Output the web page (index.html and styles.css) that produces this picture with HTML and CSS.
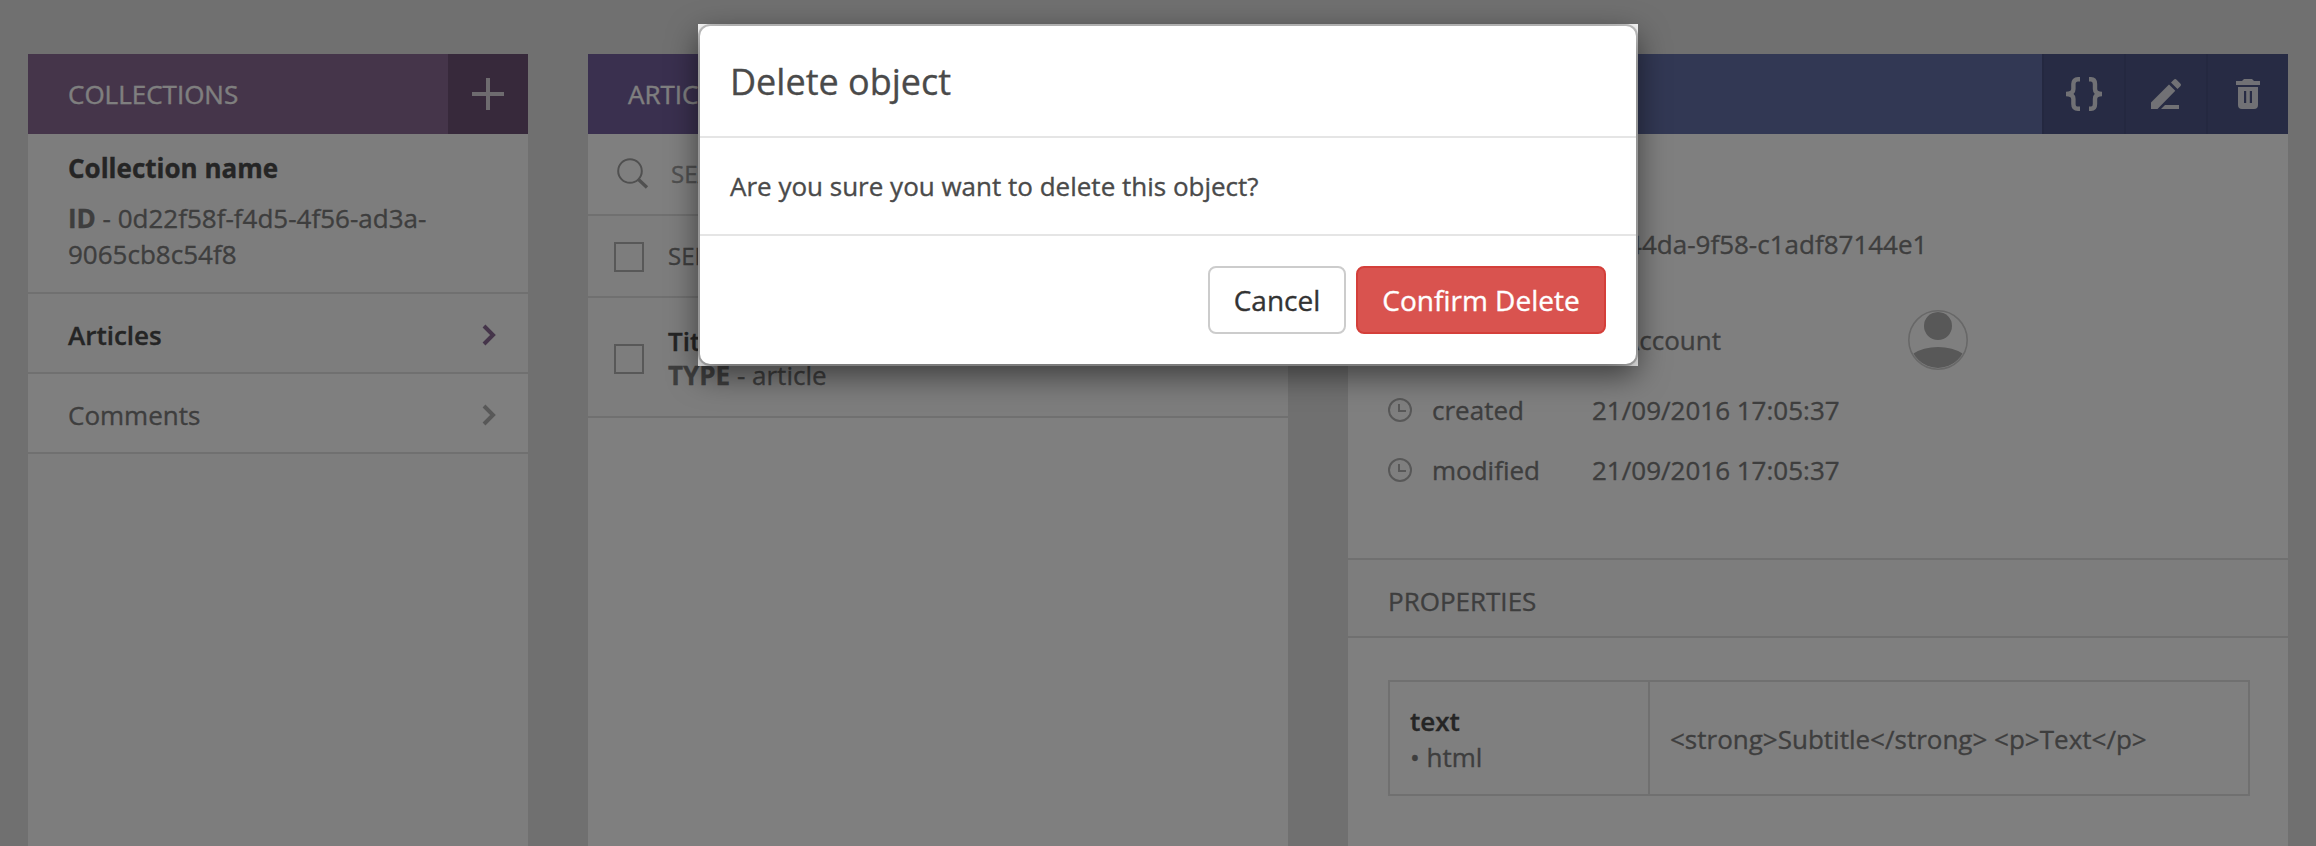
FILE: index.html
```html
<!DOCTYPE html>
<html lang="en">
<head>
<meta charset="utf-8">
<title>Delete object</title>
<link rel="stylesheet" href="styles.css">
</head>
<body>
<main class="board">
  <section class="panel panel-collections">
    <header class="panel-head head-plum">
      <h2 class="panel-title">COLLECTIONS</h2>
      <button class="add-button" aria-label="Add"><svg width="32" height="32" viewBox="0 0 32 32"><path d="M16 0v32M0 16h32" stroke="currentColor" stroke-width="4"/></svg></button>
    </header>
    <div class="collection">
      <h3 class="name">Collection name</h3>
      <p class="collection-id"><b>ID</b> - 0d22f58f-f4d5-4f56-ad3a-9065cb8c54f8</p>
    </div>
    <div class="nav-row nav-active"><span>Articles</span><svg class="chevron" width="14" height="22" viewBox="0 0 14 22"><path d="M2 2l9 9-9 9" fill="none" stroke="currentColor" stroke-width="4"/></svg></div>
    <div class="nav-row"><span>Comments</span><svg class="chevron" width="14" height="22" viewBox="0 0 14 22"><path d="M2 2l9 9-9 9" fill="none" stroke="currentColor" stroke-width="4"/></svg></div>
  </section>

  <section class="panel panel-list">
    <header class="panel-head head-violet"><h2 class="panel-title">ARTICLES</h2></header>
    <div class="search-row">
      <svg width="32" height="32" viewBox="0 0 32 32" fill="none" stroke="currentColor"><circle cx="13" cy="13" r="11.8" stroke-width="2"/><path d="M21.5 21.5l8.5 8" stroke-width="3.4"/></svg>
      <span>SEARCH</span>
    </div>
    <div class="select-row"><i class="checkbox"></i><span>SELECT ALL</span></div>
    <div class="item-row">
      <i class="checkbox"></i>
      <div class="item-text"><div class="strong">Title</div><div><b>TYPE</b> - article</div></div>
    </div>
  </section>

  <section class="panel panel-detail">
    <header class="panel-head head-blue">
      <div class="tools">
        <button class="tool" aria-label="JSON"><svg width="36" height="34" viewBox="0 0 36 34" fill="none" stroke="currentColor" stroke-width="4.4"><path d="M14 2.2h-2Q7.4 2.2 7.4 7v5Q7.4 17 0 17Q7.4 17 7.4 22v5Q7.4 31.8 12 31.8h2M23 2.2h2Q29 2.2 29 7v5Q29 17 36 17Q29 17 29 22v5Q29 31.8 25 31.8h-2"/></svg></button>
        <button class="tool" aria-label="Edit"><svg width="30" height="30" viewBox="0 0 30 30" fill="currentColor"><path d="M0 23.500L18 5.500l6.300 6.300L6.500 30H0zM20 3.500l2.800-2.800q1.400-1.400 2.800 0l3.700 3.700q1.400 1.400 0 2.800L26.500 10zM14 26h14v4H10z"/></svg></button>
        <button class="tool" aria-label="Delete"><svg width="24" height="30" viewBox="0 0 24 30" fill="currentColor"><path fill-rule="evenodd" d="M0 2h6l2-2h8l2 2h6v4H0zM2 8h20v18q0 4-4 4H6q-4 0-4-4zM8 12v12h2.200V12zM13.800 12v12H16V12z"/></svg></button>
      </div>
    </header>
    <div class="meta">
      <div class="meta-uuid">7c1e52a0-3b96-44da-9f58-c1adf87144e1</div>
      <div class="meta-account">
        <span class="account-name">My Account</span>
        <svg class="avatar" width="60" height="60" viewBox="0 0 60 60"><defs><clipPath id="face"><circle cx="30" cy="30" r="28"/></clipPath></defs><g clip-path="url(#face)" fill="currentColor"><circle cx="30" cy="16" r="14"/><ellipse cx="30" cy="61" rx="36" ry="24"/></g><circle class="avatar-ring" cx="30" cy="30" r="29.200"/></svg>
      </div>
      <div class="meta-row"><svg class="clock" width="24" height="24" viewBox="0 0 24 24"><circle cx="12" cy="12" r="11"/><path d="M11 6v7h7"/></svg><span>created</span><span>21/09/2016 17:05:37</span></div>
      <div class="meta-row"><svg class="clock" width="24" height="24" viewBox="0 0 24 24"><circle cx="12" cy="12" r="11"/><path d="M11 6v7h7"/></svg><span>modified</span><span>21/09/2016 17:05:37</span></div>
    </div>
    <div class="section-bar">PROPERTIES</div>
    <div class="properties">
      <div class="prop-key"><div class="strong">text</div><div>• html</div></div>
      <div class="prop-value">&lt;strong&gt;Subtitle&lt;/strong&gt; &lt;p&gt;Text&lt;/p&gt;</div>
    </div>
  </section>
</main>

<div class="backdrop">
  <div class="dialog">
    <div class="dialog-content">
      <div class="dialog-head">Delete object</div>
      <div class="dialog-body">Are you sure you want to delete this object?</div>
      <div class="dialog-foot">
        <button class="btn btn-default">Cancel</button>
        <button class="btn btn-danger">Confirm Delete</button>
      </div>
    </div>
  </div>
</div>
</body>
</html>
```
FILE: styles.css
```css
* { box-sizing: border-box; }
body {
  margin: 0;
  height: 846px;
  overflow: hidden;
  background: #e0e0e0;
  color: #7c7c7c;
  font: 26px/36px "Open Sans", "Noto Sans", sans-serif;
  -webkit-text-stroke: .35px currentColor;
}
h2, h3, p { margin: 0; font: inherit; }
button { font: inherit; border: 0; padding: 0; color: inherit; background: none; }
svg { display: block; flex: none; }

.board { display: flex; gap: 60px; height: 846px; padding: 54px 28px 0; }
.panel { display: flex; flex-direction: column; background: #fff; }
.panel-collections { width: 500px; background: #fafafa; }
.panel-list { width: 700px; }
.panel-detail { width: 940px; }
.panel-head { display: flex; height: 80px; align-items: center; justify-content: space-between; flex: none; padding-left: 40px; color: #fff; }
.head-plum { background: #8a6a94; }
.head-violet { background: #74609e; }
.head-blue { background: #6470a8; justify-content: flex-end; }
.add-button { display: flex; align-items: center; justify-content: center; width: 80px; height: 80px; background: #6e5276; color: #dcd6de; }
.name { font-weight: 700; color: #4a4a4a; }
.strong { font-weight: 600; color: #4a4a4a; }

.collection { height: 160px; padding: 16px 40px 0; border-bottom: 2px solid #e0e0e0; }
.collection-id { width: 390px; margin-top: 14px; }
.nav-row { display: flex; align-items: center; justify-content: space-between; height: 80px; padding: 3px 32px 0 40px; background: #fff; border-bottom: 2px solid #e0e0e0; }
.nav-active { background: #fafafa; font-weight: 600; color: #4a4a4a; }
.chevron { color: #b0b0b0; }
.nav-active .chevron { color: #8a6a94; }

.search-row { display: flex; align-items: center; gap: 22px; height: 82px; padding-left: 29px; border-bottom: 2px solid #e0e0e0; color: #a0a0a0; font-size: 24px; }
.select-row { display: flex; align-items: center; gap: 24px; height: 82px; padding-left: 26px; background: #fafafa; border-bottom: 2px solid #e0e0e0; font-size: 24px; }
.item-row { display: flex; align-items: center; gap: 24px; height: 120px; padding: 2px 0 0 26px; background: #fafafa; border-bottom: 2px solid #e0e0e0; line-height: 34px; }
.checkbox { width: 28px; width: 30px; height: 30px; margin-top: 2px; border: 2px solid #b0b0b0; }

.tools { display: flex; height: 80px; }
.tool { display: flex; align-items: center; justify-content: center; width: 82px; background: #4e5688; border-left: 2px solid #485080; color: #e2e3ea; }
.meta { height: 426px; padding: 92px 40px 0; border-bottom: 2px solid #e0e0e0; }
.meta-uuid { padding-left: 46px; }
.meta-account { display: flex; align-items: center; justify-content: space-between; height: 60px; width: 580px; margin: 48px 0 32px; }
.account-name { width: 333px; text-align: right; }
.avatar { color: #b0b0b0; }
.avatar-ring { fill: none; stroke: #d0d0d0; stroke-width: 1.600; }
.meta-row { display: grid; grid-template-columns: 44px 160px auto; align-items: center; height: 60px; }
.meta-account + .meta-row { margin-top: -22px; }
.clock { fill: none; stroke: #b0b0b0; stroke-width: 2; }
.section-bar { height: 78px; padding: 23px 40px 0; background: #fafafa; border-bottom: 2px solid #e0e0e0; }
.properties { display: grid; grid-template-columns: 260px 1fr; height: 116px; margin: 42px 38px 0 40px; border: 2px solid #e0e0e0; }
.prop-key { padding: 21px 20px; border-right: 2px solid #e0e0e0; }
.prop-value { display: flex; align-items: center; padding-left: 20px; }

/* Modal layer over the board */
.backdrop { position: absolute; inset: 0; padding-top: 24px; background: rgba(0, 0, 0, .5); }
.dialog { width: 940px; height: 342px; margin: 0 auto 0 698px; background: #fff; padding: 2px; }
.dialog-content { height: 338px; border-radius: 10px; background: #fff; color: #4a4a4a; box-shadow: 0 0 0 2px rgba(0, 0, 0, .2), 0 10px 30px 2px rgba(0, 0, 0, .5); }
.dialog-head { height: 112px; padding: 30px; line-height: 52px; font-size: 36px; border-bottom: 2px solid #e5e5e5; }
.dialog-body { height: 98px; padding: 30px; border-bottom: 2px solid #e5e5e5; }
.dialog-foot { display: flex; justify-content: flex-end; gap: 10px; padding: 30px; }
.btn { height: 68px; border: 2px solid #ccc; border-radius: 8px; font-size: 28px; line-height: 40px; }
.btn-default { width: 138px; color: #333; background: #fff; }
.btn-danger { width: 250px; color: #fff; background: #d9534f; border-color: #d43f3a; }
```
